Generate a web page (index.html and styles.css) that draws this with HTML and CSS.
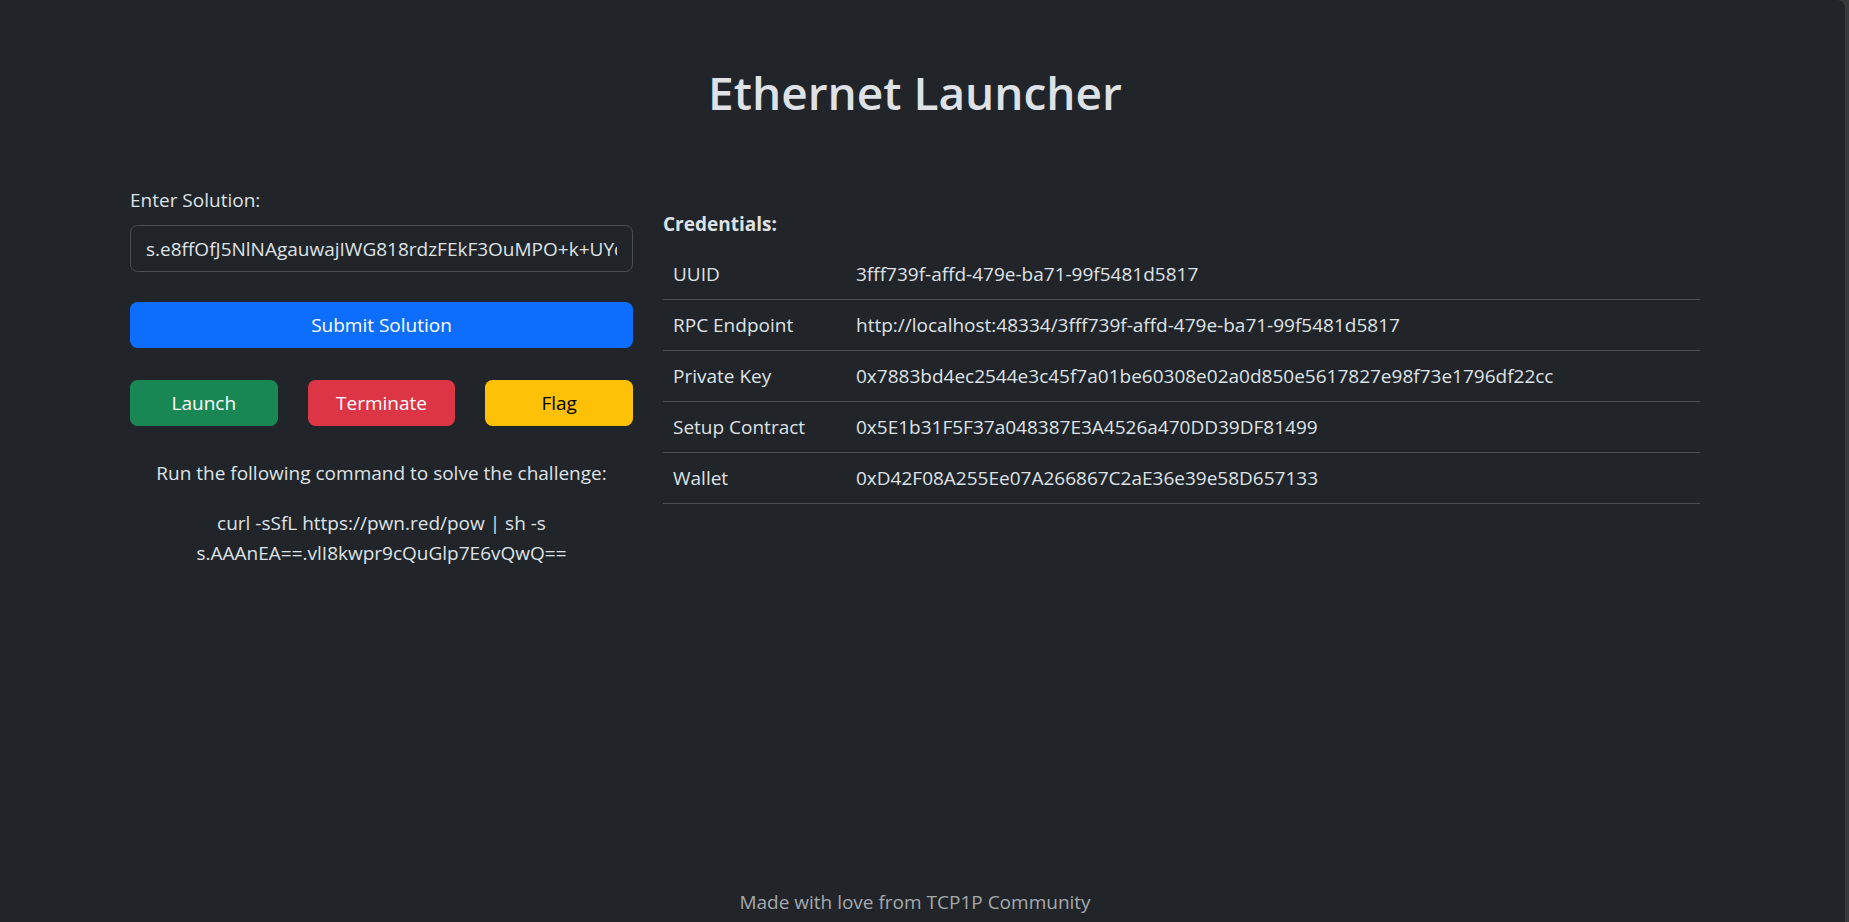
FILE: index.html
```html
<!DOCTYPE html>
<html lang="en">
<head>
<meta charset="utf-8">
<title>Ethernet Launcher</title>
<link rel="stylesheet" href="styles.css">
</head>
<body>
  <h1 class="title">Ethernet Launcher</h1>
  <main class="container">
    <div class="row">
      <section class="left">
        <label class="label" for="solution">Enter Solution:</label>
        <input class="input" id="solution" type="text" value="s.e8ffOfJ5NlNAgauwajIWG818rdzFEkF3OuMPO+k+UYq2bX9dLm1Zc==">
        <button class="btn btn-primary btn-block">Submit Solution</button>
        <div class="actions">
          <button class="btn btn-success">Launch</button>
          <button class="btn btn-danger">Terminate</button>
          <button class="btn btn-warning">Flag</button>
        </div>
        <p class="hint">Run the following command to solve the challenge:</p>
        <p class="cmd">curl -sSfL https://pwn.red/pow | sh -s s.AAAnEA==.vlI8kwpr9cQuGlp7E6vQwQ==</p>
      </section>
      <section class="right">
        <p class="cred-title">Credentials:</p>
        <table class="table">
          <colgroup><col class="col-key"><col></colgroup>
          <tbody>
            <tr><td>UUID</td><td>3fff739f-affd-479e-ba71-99f5481d5817</td></tr>
            <tr><td>RPC Endpoint</td><td>http://localhost:48334/3fff739f-affd-479e-ba71-99f5481d5817</td></tr>
            <tr><td>Private Key</td><td>0x7883bd4ec2544e3c45f7a01be60308e02a0d850e5617827e98f73e1796df22cc</td></tr>
            <tr><td>Setup Contract</td><td>0x5E1b31F5F37a048387E3A4526a470DD39DF81499</td></tr>
            <tr><td>Wallet</td><td>0xD42F08A255Ee07A266867C2aE36e39e58D657133</td></tr>
          </tbody>
        </table>
      </section>
    </div>
  </main>
  <footer class="footer">Made with love from TCP1P Community</footer>
</body>
</html>
```
FILE: styles.css
```css
html {
  font-size: 19px;
  background: #3a3a3a;
}
* { box-sizing: border-box; }
body {
  margin: 0 4px 0 0;
  padding-right: 15px;
  min-height: 100vh;
  display: flex;
  flex-direction: column;
  background: #212529;
  color: #dee2e6;
  font-family: "Open Sans", "Noto Sans", sans-serif;
  font-size: 1rem;
  line-height: 30px;
  border-top-right-radius: 8px;
}
.title {
  margin: 62px 0 0;
  text-align: center;
  font-size: 46px;
  line-height: 60px;
  font-weight: 600;
  color: #dee2e6;
}
.container {
  width: 1600px;
  margin: 63px auto 0;
  padding: 0 15px;
}
.row {
  display: grid;
  grid-template-columns: 503px 1fr;
  column-gap: 30px;
}
.left { display: flex; flex-direction: column; }
.label { display: block; margin-bottom: 10px; }
.input {
  width: 100%;
  height: 47px;
  padding: 0 15px;
  border: 1px solid #495057;
  border-radius: 7.5px;
  background: #212529;
  color: #dee2e6;
  font: inherit;
  outline: none;
}
.btn {
  height: 46px;
  border: none;
  border-radius: 7.5px;
  font: inherit;
  color: #fff;
  cursor: pointer;
}
.btn-block { width: 100%; margin-top: 30px; }
.btn-primary { background: #0d6efd; }
.btn-success { background: #198754; }
.btn-danger { background: #dc3545; }
.btn-warning { background: #ffc107; color: #000; }
.actions {
  margin-top: 32px;
  display: grid;
  grid-template-columns: repeat(3, 1fr);
  column-gap: 30px;
}
.hint { margin: 32px 0 0; text-align: center; }
.cmd { margin: 20px 0 0; text-align: center; }
.right { padding-top: 24px; }
.cred-title { margin: 0 0 10px; font-weight: 700; }
.table {
  width: 100%;
  border-collapse: collapse;
  table-layout: fixed;
}
.col-key { width: 183px; }
.table td {
  padding: 10px;
  border-bottom: 1px solid #495057;
  line-height: 30px;
  white-space: nowrap;
}
.footer {
  margin-top: auto;
  padding-bottom: 5px;
  text-align: center;
  color: #a5a9ad;
}
```
